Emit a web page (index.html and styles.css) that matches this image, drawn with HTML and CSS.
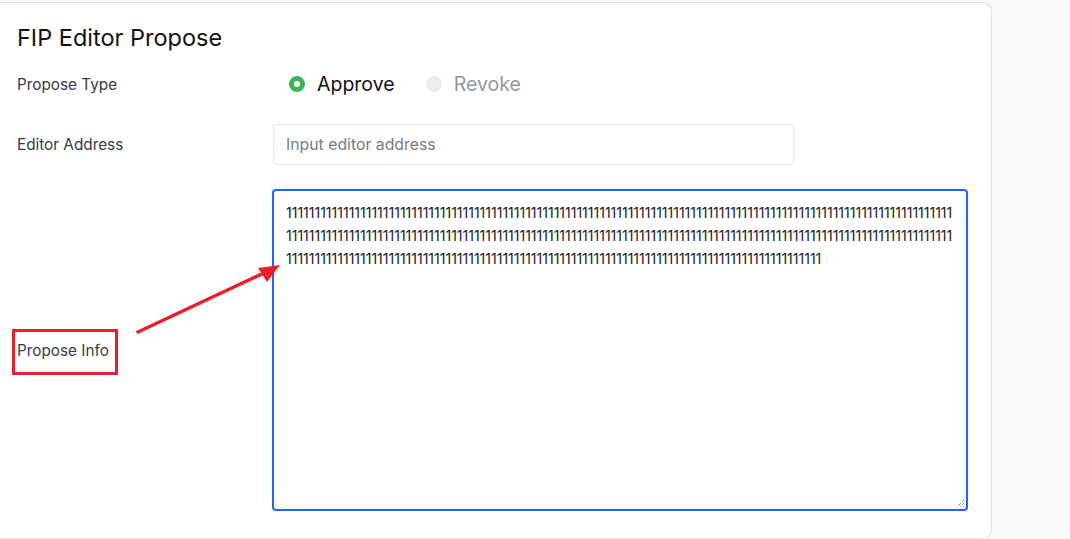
FILE: index.html
```html
<!DOCTYPE html>
<html>
<head>
<meta charset="utf-8">
<link rel="stylesheet" href="styles.css">
</head>
<body>
<div class="card">
  <h1 class="title">FIP Editor Propose</h1>
  <div class="form">
    <div class="label">Propose Type</div>
    <div class="radios">
      <label class="radio checked"><span class="dot"></span><span class="rtext">Approve</span></label>
      <label class="radio"><span class="dot"></span><span class="rtext">Revoke</span></label>
    </div>
    <div class="label">Editor Address</div>
    <div class="ctrl"><div class="input">Input editor address</div></div>
    <div class="label info">Propose Info</div>
    <div class="ctrl"><div class="textarea">1111111111111111111111111111111111111111111111111111111111111111111111111111111111111111111111111111111111111111111111111111111111111111111111111111111111111111111111111111111111111111111111111111111111111111111111111111111111111111111111111111111111111111111111111111111111111111111111111111111111111111111111111111111111111111<svg class="grip" width="10" height="10" viewBox="0 0 10 10"><path d="M9 2 L2 9 M9 5 L5 9 M9 8 L8 9" stroke="#555" stroke-width="1" stroke-dasharray="1 1"/></svg></div></div>
  </div>
  <div class="mark"></div>
  <svg class="arrow" width="160" height="90" viewBox="0 0 160 90">
    <path d="M4 74 L132 14" stroke="#e8202a" stroke-width="3.5" stroke-linecap="round"/>
    <path d="M146 7 L124 10 L133 24 Z" fill="#e8202a"/>
  </svg>
</div>
</body>
</html>
```
FILE: styles.css
```css
html, body { margin: 0; padding: 0; }
body {
  background: #f8f8f8;
  font-family: Inter, "Noto Sans", sans-serif;
  width: 1070px;
  height: 539px;
  overflow: hidden;
}
.card {
  position: relative;
  box-sizing: border-box;
  width: 992px;
  height: 537px;
  margin-top: 2px;
  background: #fff;
  border: 1px solid #e2e2e2;
  border-left: none;
  border-radius: 0 10px 10px 0;
  padding: 21px 24px 0 17px;
}
.title {
  margin: 0;
  font-size: 23.5px;
  font-weight: 400;
  line-height: 28px;
  color: #111;
}
.form {
  display: grid;
  grid-template-columns: 255px 695px;
  grid-template-rows: 32px 41px 322px;
  row-gap: 24px;
  margin-top: 16px;
  align-items: center;
}
.label {
  font-size: 15.3px;
  color: #333a46;
}
.radios { display: flex; align-items: center; padding-left: 17px; }
.radio { display: flex; align-items: center; margin-right: 31px; }
.dot {
  width: 16px; height: 16px; border-radius: 50%;
  background: #ececec; box-sizing: border-box; margin-right: 12px;
}
.radio.checked .dot { background: #fff; border: 5px solid #3fb34f; }
.rtext { font-size: 19.5px; color: #8d97a5; }
.radio.checked .rtext { color: #111; }
.ctrl { height: 100%; }
.input {
  box-sizing: border-box;
  width: 521px; height: 41px;
  margin-left: 1px;
  border: 1px solid #e8e8e8;
  border-radius: 4px;
  padding: 0 12px;
  display: flex; align-items: center;
  font-size: 15.8px; color: #767b85;
}
.textarea {
  position: relative;
  box-sizing: border-box;
  height: 322px; width: 696px;
  border: 2px solid #2563eb;
  border-radius: 4px;
  padding: 10px 12px;
  font-size: 14px; line-height: 23px;
  color: #1a1a1a;
  word-break: break-all;
}
.grip { position: absolute; right: 1px; bottom: 1px; }
.mark {
  position: absolute;
  left: 12px; top: 326px;
  width: 106px; height: 46px;
  box-sizing: border-box;
  border: 3px solid #e8202a;
}
.arrow { position: absolute; left: 134px; top: 255px; }
```
